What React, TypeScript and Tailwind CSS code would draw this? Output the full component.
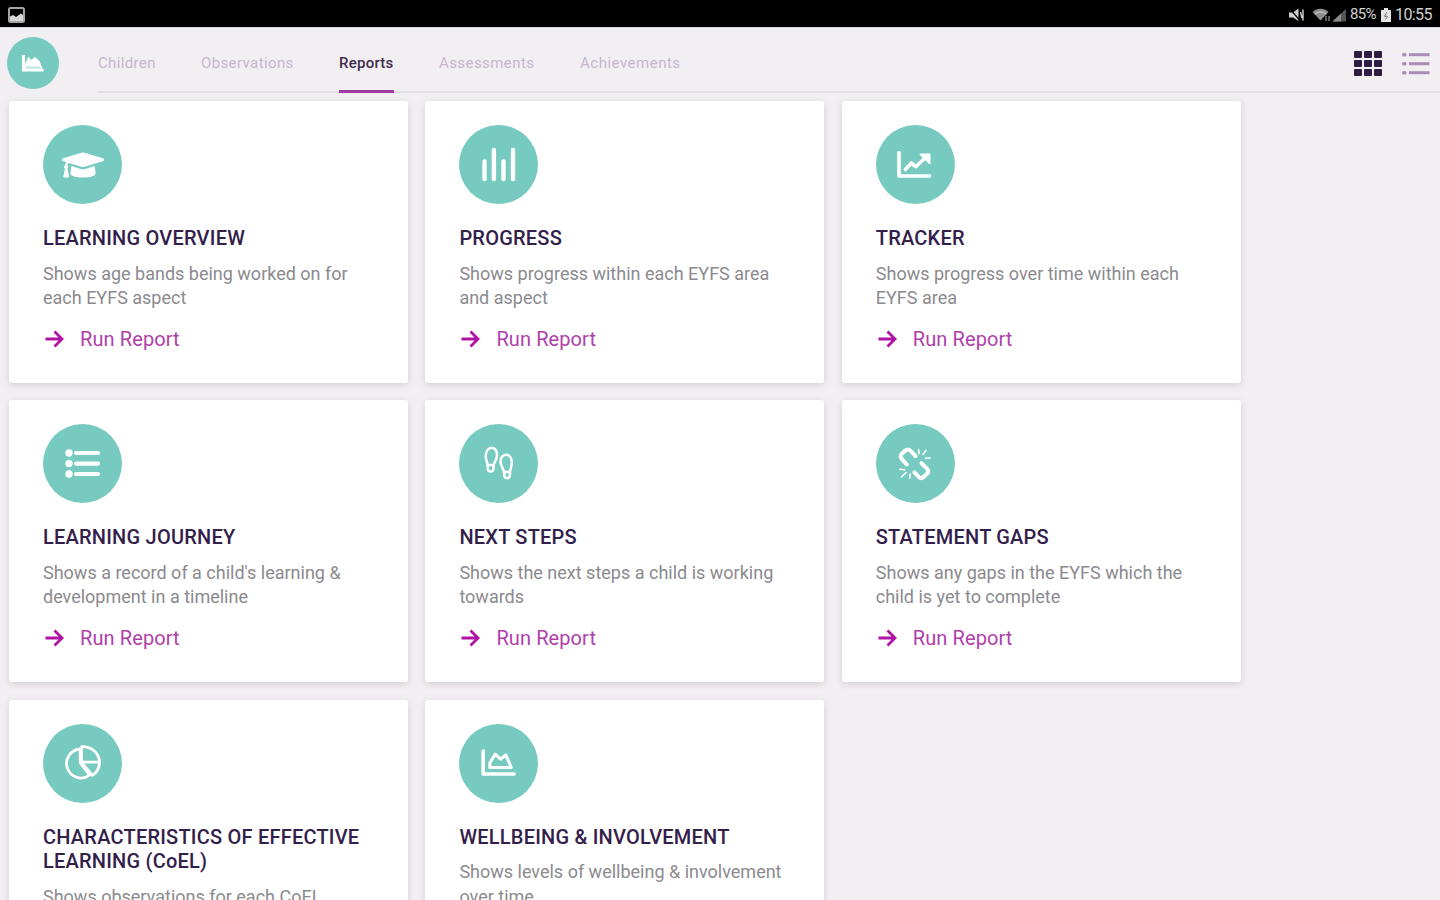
import { ReactNode } from 'react';
import clsx from 'clsx';
import { FaGraduationCap } from 'react-icons/fa';

type Report = {
  title: string;
  description: string[];
  icon: ReactNode;
};

function Icon({ children, width = 2.5 }: { children: ReactNode; width?: number }) {
  return (
    <svg
      viewBox="0 0 40 40"
      className="size-10"
      fill="none"
      stroke="currentColor"
      strokeWidth={width}
      strokeLinecap="round"
      strokeLinejoin="round"
    >
      {children}
    </svg>
  );
}

const BarsIcon = () => (
  <Icon width={4.4}>
    <path d="M5.5 16.5V34M14.9 5V34M24.5 16.5V34M34 5V34" />
  </Icon>
);

const LineChartIcon = () => (
  <Icon width={3.6}>
    <path d="M4 7.5V31H34.5" />
    <path d="M10.3 24.5L16.3 18L20.8 21.7L29.5 13.5" />
    <path d="M25.5 9.3H34.6V18.2Z" fill="currentColor" strokeWidth={1.8} />
  </Icon>
);

const ListIcon = () => (
  <Icon width={4.2}>
    <path d="M13 9H35M13 19.6H35M13 30H35" />
    <g fill="currentColor" stroke="none">
      <circle cx="6" cy="9" r="3.7" />
      <circle cx="6" cy="19.6" r="3.7" />
      <circle cx="6" cy="30" r="3.7" />
    </g>
  </Icon>
);

const StepsIcon = () => (
  <Icon width={2.5}>
    <path d="M8.7 21C8.3 18 6.5 16 6.7 11.8C6.9 7 9.4 3.7 12.7 3.7C16.2 3.7 18.3 7.2 18 11.6C17.7 15.8 15.3 18 14.7 21Z" />
    <path d="M8.7 21.5L8.9 25.3A2.8 2.8 0 0 0 14.4 25.3L14.7 21.5" />
    <path d="M25 28C24.6 25 22 22.5 21.6 18.6C21.2 14 23.6 10.8 27 10.8C30.4 10.8 32.8 14 32.8 18.6C32.8 22.6 31.3 25 31 28Z" />
    <path d="M25 28.5L25.4 32.2A2.8 2.8 0 0 0 30.8 32.2L31 28.5" />
  </Icon>
);

const BrokenLinkIcon = () => (
  <Icon width={4}>
    <path d="M11.8 20.5L6.9 15.2Q4.4 12.3 6.9 9.6L10 6.7Q12.9 4.2 15.6 6.9L20.6 12" />
    <path d="M26.4 19.2L32 24.6Q34.4 27 32.2 29.4L28.6 33Q26.2 35.2 23.8 32.8L19.4 28.4" />
    <path
      d="M24.2 9.5L23.5 5.6M28 10.5L31 6.4M30.6 14.4L35.2 14M9.6 25.8L4.6 25.2M11 28.6L6.4 33M15 30L14.8 34.2"
      strokeWidth={1.6}
    />
  </Icon>
);

const PieIcon = () => (
  <Icon width={2.8}>
    <path d="M17.2 6A14.5 14.5 0 1 0 26.6 32.2L17.2 20Z" />
    <path d="M18.6 3.6C28.6 3.2 36 10 36.6 19.2H18.6Z" />
    <path d="M18.8 19.6L29.4 32.4C33.8 29.6 36.2 25 36.6 19.6" />
  </Icon>
);

const AreaIcon = () => (
  <Icon width={3.6}>
    <path d="M4.2 8V31H35" />
    <path d="M10.8 24.4V20L16.2 11.2L21.6 16.2L26.8 11.8L32.2 24.4Z" strokeWidth={3} />
  </Icon>
);

const reports: Report[] = [
  {
    title: 'LEARNING OVERVIEW',
    description: ['Shows age bands being worked on for', 'each EYFS aspect'],
    icon: <FaGraduationCap className="size-[42px]" />,
  },
  {
    title: 'PROGRESS',
    description: ['Shows progress within each EYFS area', 'and aspect'],
    icon: <BarsIcon />,
  },
  {
    title: 'TRACKER',
    description: ['Shows progress over time within each', 'EYFS area'],
    icon: <LineChartIcon />,
  },
  {
    title: 'LEARNING JOURNEY',
    description: ["Shows a record of a child's learning &", 'development in a timeline'],
    icon: <ListIcon />,
  },
  {
    title: 'NEXT STEPS',
    description: ['Shows the next steps a child is working', 'towards'],
    icon: <StepsIcon />,
  },
  {
    title: 'STATEMENT GAPS',
    description: ['Shows any gaps in the EYFS which the', 'child is yet to complete'],
    icon: <BrokenLinkIcon />,
  },
  {
    title: 'CHARACTERISTICS OF EFFECTIVE LEARNING (CoEL)',
    description: ['Shows observations for each CoEL'],
    icon: <PieIcon />,
  },
  {
    title: 'WELLBEING & INVOLVEMENT',
    description: ['Shows levels of wellbeing & involvement', 'over time'],
    icon: <AreaIcon />,
  },
];

const tabs = [
  { label: 'Children', className: 'w-[58px] tracking-[0.35px]' },
  { label: 'Observations', className: 'w-[93px] tracking-[0.38px]' },
  { label: 'Reports', className: 'w-[55px] tracking-[0.25px]', active: true },
  { label: 'Assessments', className: 'w-[96px] tracking-[0.42px]' },
  { label: 'Achievements', className: 'w-[100px] tracking-[0.5px]' },
];

function StatusBar() {
  return (
    <div className="flex h-[27px] shrink-0 items-center justify-between bg-black pt-0.5 pr-[7px] pl-2 text-[#d0d0d0]">
      <svg viewBox="0 0 17 16" className="h-4 w-[17px]">
        <rect x="1" y="1" width="15" height="14" rx="1.5" fill="none" stroke="#a5a5a5" strokeWidth="2" />
        <path d="M2 13V9.5L5 8L8 10L13 6.5L15 8V14H2Z" fill="#d6d6d6" />
      </svg>
      <div className="flex items-center">
        <svg viewBox="0 0 16 14" className="mr-px h-3.5 w-4" fill="currentColor">
          <path d="M0 4.5H4L9.5 0.5V13L4 9.5H0Z" />
          <path d="M1 1L11 12.5" stroke="#000" strokeWidth="1.3" />
          <path d="M11.5 4L13 10M14 1.5V12.5" stroke="currentColor" strokeWidth="1.4" />
        </svg>
        <svg viewBox="0 0 20 14" className="ml-1.5 h-3.5 w-5">
          <path d="M0.5 4C5 -0.3 12 -0.3 16.5 4L8.5 12.5Z" fill="#8c8c8c" />
          <path d="M3 6C6.5 3.2 10.5 3.2 14 6" stroke="#c4c4c4" strokeWidth="1.2" fill="none" />
          <path d="M14 8V13M17 8V13" stroke="#777" strokeWidth="1.5" />
        </svg>
        <svg viewBox="0 0 15 14" className="h-3.5 w-[15px]">
          <path d="M0.5 13.5L14 1V13.5Z" fill="#555" />
          <path d="M0.5 13.5L9 5.6V13.5Z" fill="#8c8c8c" />
        </svg>
        <span className="ml-[3px] w-[27px] text-[15px] leading-none tracking-[-0.7px]">85%</span>
        <svg viewBox="0 0 10 14" className="ml-1 h-3.5 w-2.5">
          <path d="M3 0H7V2H10V14H0V2H3Z" fill="#e4e4e4" />
          <path d="M5.8 4L3.6 8.3H6.5L4.5 11.5" stroke="#777" fill="none" />
        </svg>
        <span className="ml-1 w-[38px] text-[16px] leading-none tracking-[-0.6px]">10:55</span>
      </div>
    </div>
  );
}

function Header() {
  return (
    <header className="flex h-[66px] shrink-0 border-t border-[#dad8db] pl-[7px]">
      <div className="mt-[9px] flex size-[52px] items-center justify-center rounded-full bg-[#77cabf] text-white">
        <svg viewBox="0 0 24 20" className="h-5 w-6" fill="currentColor">
          <path d="M1 2H4V15.5H22.5V18.5H1Z" />
          <path d="M4 11L7.5 3.5L10 7L14 4L18.5 8L21.5 15.5H4Z" />
          <path d="M4.5 14.2H19" stroke="#9edbd2" strokeWidth="1" />
        </svg>
      </div>
      <nav className="ml-[39px] flex flex-1 gap-[45px] border-b-2 border-[#e1dee3]">
        {tabs.map((tab) => (
          <a
            key={tab.label}
            className={clsx(
              '-mb-0.5 flex items-center border-b-[3px] pt-[9px] text-[15px] whitespace-nowrap',
              tab.className,
              tab.active
                ? 'border-[#a23aa4] font-medium text-[#3f2b4c]'
                : 'border-transparent text-[#c6b5cf]'
            )}
          >
            {tab.label}
          </a>
        ))}
        <div className="mr-[10px] ml-auto flex items-center gap-5 pt-2">
          <svg viewBox="0 0 28 26" className="h-[26px] w-7" fill="#2f1c42">
            {[0, 9, 18].map((y) =>
              [0, 10, 20].map((x) => <rect key={`${x}-${y}`} x={x} y={y} width="8" height="7" rx="1" />)
            )}
          </svg>
          <svg viewBox="0 0 28 22" className="h-[22px] w-7" fill="#ac8bb9">
            {[0, 9, 18].map((y) => (
              <g key={y}>
                <rect x="0" y={y} width="4.5" height="3.5" rx="1.5" />
                <rect x="7" y={y + 0.2} width="20.5" height="3" />
              </g>
            ))}
          </svg>
        </div>
      </nav>
    </header>
  );
}

function ReportCard({ report }: { report: Report }) {
  return (
    <article className="rounded-[3px] bg-white px-[34px] pt-6 pb-[31px] shadow-[0_2px_7px_rgba(70,50,80,0.17)]">
      <div className="flex size-[79px] items-center justify-center rounded-full bg-[#77cabf] text-white">
        {report.icon}
      </div>
      <h2 className="mt-[22px] -mr-4 text-[20px] leading-[24.5px] font-medium tracking-[0.22px] text-[#32204a]">
        {report.title}
      </h2>
      <p className="mt-[11px] text-[18px] leading-[24.5px] whitespace-nowrap text-[#8b8a8e]">
        {report.description.map((line) => (
          <span key={line} className="block">
            {line}
          </span>
        ))}
      </p>
      <a className="mt-4 flex items-center text-[20px] leading-[25px] tracking-[0.1px] text-[#b040a9]">
        <svg viewBox="0 0 20 18" className="ml-0.5 h-[18px] w-5" fill="none" stroke="#b012a5" strokeWidth="2.8">
          <path d="M0.5 9H17M9.5 1.5L17 9L9.5 16.5" />
        </svg>
        <span className="ml-[15px]">Run Report</span>
      </a>
    </article>
  );
}

export default function App() {
  return (
    <div className="flex h-[900px] w-[1440px] flex-col overflow-hidden bg-[#f2eff3] font-['Roboto',sans-serif]">
      <StatusBar />
      <Header />
      <main className="grid grid-cols-[repeat(3,399px)] gap-x-[17.4px] gap-y-[17.9px] pt-2 pl-[9px]">
        {reports.map((report) => (
          <ReportCard key={report.title} report={report} />
        ))}
      </main>
    </div>
  );
}
